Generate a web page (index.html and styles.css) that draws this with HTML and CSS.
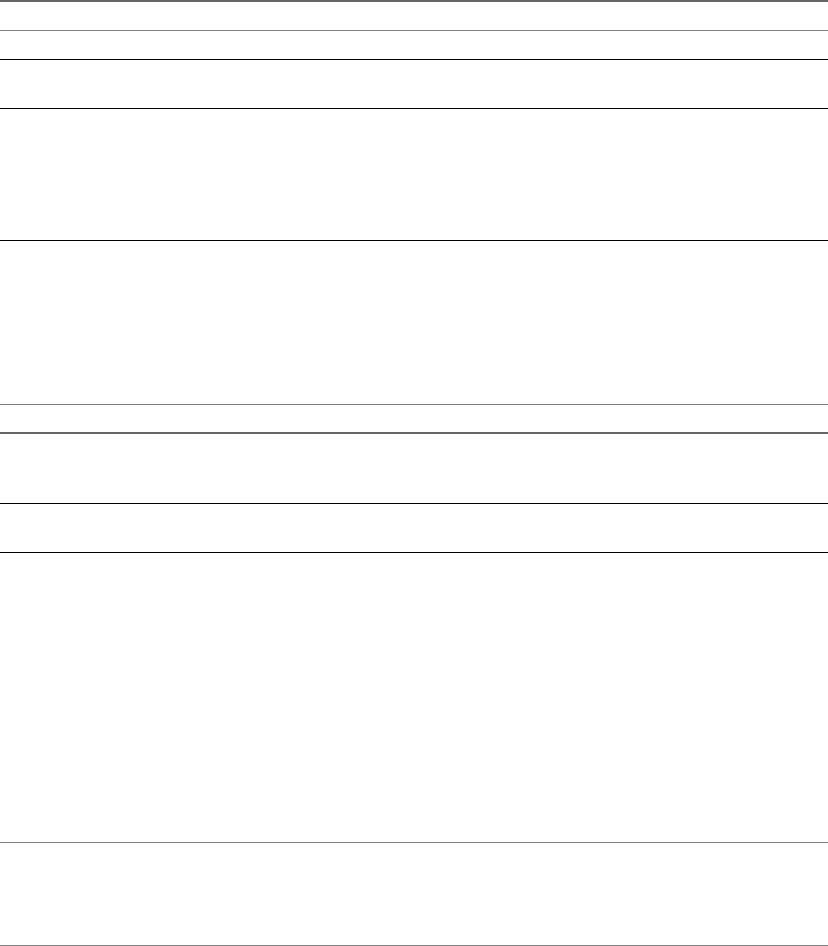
FILE: index.html
```html
<!DOCTYPE html>
<html lang="en">
<head>
<meta charset="utf-8">
<title>Page</title>
<link rel="stylesheet" href="styles.css">
</head>
<body>
<main class="page">
  <div class="row row-top h28 line-gray"></div>
  <div class="row h28 line-dark"></div>
  <div class="row h48 line-dark"></div>
  <div class="row h131 line-dark"></div>
  <div class="row h163 line-gray"></div>
  <div class="row h27 line-thick"></div>
  <div class="row h69 line-dark"></div>
  <div class="row h48 line-dark"></div>
  <div class="row h289 line-gray"></div>
  <div class="row h102 line-gray"></div>
</main>
</body>
</html>
```
FILE: styles.css
```css
html, body {
  margin: 0;
  padding: 0;
  background: #ffffff;
  font-family: "Liberation Sans", Arial, sans-serif;
}
.page {
  display: flex;
  flex-direction: column;
  width: 828px;
}
.row {
  box-sizing: content-box;
  width: 100%;
}
.row-top {
  border-top: 2px solid #666666;
}
.line-gray { border-bottom: 1px solid #808080; }
.line-dark { border-bottom: 1px solid #000000; }
.line-thick { border-bottom: 2px solid #666666; }
.h27 { height: 27px; }
.h28 { height: 28px; }
.h48 { height: 48px; }
.h69 { height: 69px; }
.h102 { height: 102px; }
.h131 { height: 131px; }
.h163 { height: 163px; }
.h289 { height: 289px; }
```
